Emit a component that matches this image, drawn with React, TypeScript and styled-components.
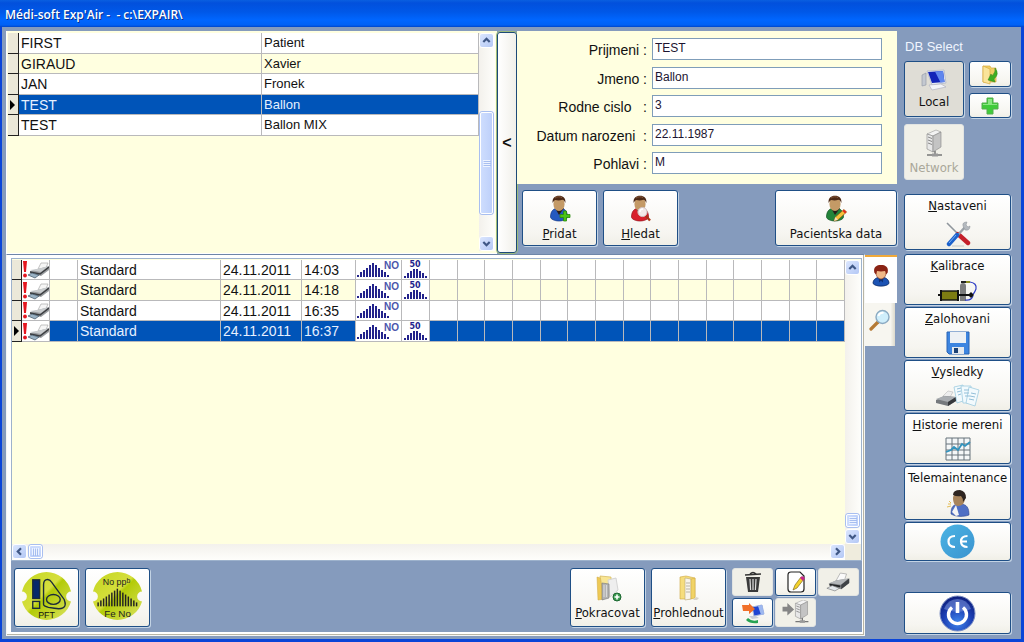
import React from "react";
import styled, { createGlobalStyle, css } from "styled-components";

const ui = '"DejaVu Sans Condensed", "Noto Sans", sans-serif';
const sans = '"Liberation Sans", Arial, sans-serif';
const steel = "#859bbd";
const cream = "#ffffe0";

const Global = createGlobalStyle`
  *, *::before, *::after { box-sizing: border-box; }
  body { margin: 0; font-family: ${sans}; color: #111; }
  button, input { font: inherit; color: inherit; margin: 0; }
  svg { display: block; flex: none; }
`;

const Window = styled.div`
  min-height: 100vh;
  display: flex;
  flex-direction: column;
  background: ${steel};
  border: solid #0a45d8;
  border-width: 0 3px 3px 2px;
`;

const TitleBar = styled.header`
  height: 27px;
  margin: 0 -3px 0 -2px;
  padding: 3px 5px 0;
  background: linear-gradient(#0a5fe0 0, #0250dc 3px, #0058e8 12px, #0066ff 20px, #0061f5 25px, #0045c8 27px);
  color: #fff;
  font: 600 12px/24px "Open Sans", "Noto Sans", sans-serif;
  text-shadow: 1px 1px 0 #0a2f8c;
  white-space: pre;
`;

const Body = styled.div`
  flex: 1;
  display: grid;
  grid-template-columns: minmax(0, 1fr) 107px;
  column-gap: 7px;
  padding: 4px 10px 3px 4px;
`;

const Main = styled.main`
  display: flex;
  flex-direction: column;
  min-width: 0;
`;

const TopArea = styled.section`
  display: grid;
  grid-template-columns: minmax(0, 1fr) 20px 380px;
  height: 223px;
`;

const ListPanel = styled.div`
  display: grid;
  grid-template-columns: minmax(0, 1fr) 16px;
  padding: 2px 2px 2px 1px;
  background: ${cream};
  border-left: 1px solid #fff;
  border-bottom: 1px solid #fff;
`;

const Splitter = styled.button`
  margin: 1px 0;
  padding: 0;
  border: 1px solid #1c4a78;
  outline: 1px solid #9dbb7c;
  border-radius: 3px;
  background: linear-gradient(90deg, #fff, #f1f0ea);
  font: bold 16px/16px ${sans};
`;

const Table = styled.table`
  width: 100%;
  table-layout: fixed;
  border-collapse: separate;
  border-spacing: 0;
  font-size: 14px;
  line-height: 16px;
`;

const Row = styled.tr<{ $selected?: boolean; $short?: boolean }>`
  height: ${(p) => (p.$short ? 20 : 21)}px;
  background: #fff;
  &:nth-child(even) { background: ${cream}; }
  ${(p) => p.$selected && css`
    && { background: #0054b8; color: #e6f0ff; }
  `}
`;

const Cell = styled.td<{ $small?: boolean; $picture?: boolean }>`
  padding: 0 0 0 2px;
  border-right: 1px solid #b9b9bb;
  border-bottom: 1px solid #b9b9bb;
  white-space: nowrap;
  overflow: hidden;
  font-size: ${(p) => (p.$small ? 13 : 14)}px;
  ${(p) => p.$picture && css`
    padding: 0;
    background: #fff;
  `}
`;

const Marker = styled.th`
  padding: 0;
  background: #ebe8d9;
  border-right: 1px solid #222;
  border-bottom: 1px solid #222;
`;

const Side = styled.div`
  display: flex;
  flex-direction: column;
`;

const Form = styled.form`
  height: 153px;
  padding: 7px 15px 10px 0;
  background: ${cream};
  display: grid;
  grid-template-columns: 130px minmax(0, 1fr);
  grid-auto-rows: 22px;
  align-content: space-between;
  column-gap: 5px;
`;

const Label = styled.label`
  font-size: 14px;
  line-height: 24px;
  text-align: right;
  white-space: pre;
`;

const Field = styled.input`
  min-width: 0;
  padding: 0 2px 2px;
  border: 1px solid #7f9db9;
  background: #fff;
  font-size: 12px;
  color: #1c1430;
`;

const FormActions = styled.div`
  display: flex;
  gap: 6px;
  padding: 6px 0 0 5px;
`;

const Button = styled.button<{ $w?: number; $h?: number; $pressed?: boolean; $right?: boolean; $top?: boolean }>`
  display: flex;
  flex-direction: column;
  align-items: center;
  justify-content: ${(p) => (p.$top ? "space-between" : "center")};
  gap: ${(p) => (p.$top ? 0 : 2)}px;
  flex: none;
  width: ${(p) => (p.$w ? `${p.$w}px` : "100%")};
  height: ${(p) => p.$h ?? 56}px;
  margin-left: ${(p) => (p.$right ? "auto" : "0")};
  padding: 2px 0;
  border: 1px solid #1f4f86;
  border-radius: 3px;
  box-shadow: 1px 1px 0 #c3d3e4;
  background: ${(p) => (p.$pressed ? "#dfddd6" : "linear-gradient(#fff, #f6f5f0 80%, #f0efe7)")};
  font: 13px/17px ${ui};
  white-space: nowrap;
  &:disabled {
    border-color: #e2e4e2;
    box-shadow: none;
    background: #f1f0e8;
    color: #a9a799;
  }
`;

const Bottom = styled.section`
  flex: 1;
  display: grid;
  grid-template-columns: minmax(0, 1fr) 32px;
`;

const Sheet = styled.div`
  display: flex;
  flex-direction: column;
  padding: 3px 2px 3px 4px;
  border: 1px solid #f5f6f4;
  border-top-color: #6e86a8;
  background: #fff;
  box-shadow: inset -1px -1px 0 #b9b5a4;
`;

const Grid = styled.div`
  flex: 1;
  display: grid;
  grid-template-columns: minmax(0, 1fr) 16px;
  grid-template-rows: minmax(0, 1fr) 16px;
  padding-top: 1px;
  border: 1px solid #9db2cc;
  background: ${cream};
`;

const Corner = styled.div`
  background: #efecdd;
`;

const Tools = styled.div`
  display: flex;
  align-items: flex-start;
  gap: 6px;
  padding: 7px 3px 4px 3px;
  height: 71px;
  background: ${steel};
`;

const ToolGrid = styled.div`
  display: grid;
  grid-template-columns: repeat(3, 41px);
  gap: 2px;
`;

const Spacer = styled.div`
  flex: 1;
`;

const Tabs = styled.div`
  display: flex;
  flex-direction: column;
  padding: 1px 0 0 0;
`;

const Tab = styled.button<{ $active?: boolean }>`
  display: flex;
  justify-content: center;
  align-items: center;
  height: ${(p) => (p.$active ? 48 : 43)}px;
  margin-right: ${(p) => (p.$active ? 0 : 2)}px;
  padding: 0 0 10px;
  border: 0;
  border-top: ${(p) => (p.$active ? "2px solid #f0a93a" : "0")};
  background: ${(p) => (p.$active ? "#fff" : "linear-gradient(90deg, #f7f6f0 85%, #dcd9cc)")};
`;

const Sidebar = styled.aside`
  display: flex;
  flex-direction: column;
  padding-bottom: 2px;
`;

const SideTitle = styled.h2`
  margin: 0;
  padding: 8px 1px 6px;
  font: 13px/16px ${sans};
  color: #f0f5ff;
`;

const DbGrid = styled.div`
  display: grid;
  grid-template-columns: 60px 42px;
  justify-content: space-between;
  row-gap: 6px;
`;

const Stack = styled.div<{ $gap: number }>`
  display: flex;
  flex-direction: column;
  gap: ${(p) => p.$gap}px;
`;

const Nav = styled.nav`
  display: flex;
  flex-direction: column;
  gap: 2px;
  margin: 14px 0 auto;
  & > :first-child { margin-bottom: 2px; }
`;

const Scroll = styled.div<{ $horizontal?: boolean }>`
  display: flex;
  flex-direction: ${(p) => (p.$horizontal ? "row" : "column")};
  justify-content: space-between;
  background: ${(p) => (p.$horizontal
    ? "linear-gradient(#f3f1ec, #fefefb)"
    : "linear-gradient(90deg, #f3f1ec, #fefefb)")};
`;

const Arrow = styled.button`
  display: flex;
  align-items: center;
  justify-content: center;
  flex: none;
  width: 15px;
  height: 15px;
  padding: 0;
  border: 1px solid #fff;
  border-radius: 3px;
  background: linear-gradient(135deg, #dbe6fe, #b4c8f5);
`;

const Thumb = styled.div<{ $horizontal?: boolean; $length: number }>`
  display: flex;
  flex: none;
  align-items: center;
  justify-content: center;
  width: ${(p) => (p.$horizontal ? p.$length : 15)}px;
  height: ${(p) => (p.$horizontal ? 15 : p.$length)}px;
  border: 1px solid #a9bff0;
  outline: 1px solid #fff;
  outline-offset: -2px;
  border-radius: 3px;
  background: linear-gradient(${(p) => (p.$horizontal ? 180 : 90)}deg, #cfdefe, #bccffa);
  ${(p) => !p.$horizontal && css`
    margin-top: auto;
    margin-bottom: ${p.$length > 50 ? 21 : 1}px;
  `}
  ${(p) => p.$horizontal && css`
    margin-right: auto;
    margin-left: 1px;
  `}
`;

const Hot = ({ children }: { children: string }) => (
  <span><u>{children[0]}</u>{children.slice(1)}</span>
);

const Chevron = ({ turn }: { turn: number }) => (
  <svg width="9" height="9" viewBox="0 0 9 9" aria-hidden="true">
    <path d="M1.3 6 4.5 2.8 7.7 6" fill="none" stroke="#3f5785" strokeWidth="2.2" transform={`rotate(${turn} 4.5 4.5)`} />
  </svg>
);

const Grip = ({ turn = 0 }: { turn?: number }) => (
  <svg width="9" height="9" viewBox="0 0 9 9" aria-hidden="true">
    <path d="M1 1.5h7M1 3.5h7M1 5.5h7M1 7.5h7" stroke="#edf3ff" transform={`rotate(${turn} 4.5 4.5)`} />
    <path d="M2 2.5h7M2 4.5h7M2 6.5h7" stroke="#93aee8" strokeWidth=".6" transform={`rotate(${turn} 4.5 4.5)`} />
  </svg>
);

const Pointer = () => (
  <svg width="8" height="12" viewBox="0 0 8 12" aria-label="current row">
    <path d="M2 1v10l5-5z" fill="#000" />
  </svg>
);

const Person = ({ color, dark, badge }: { color: string; dark: string; badge: "add" | "find" | "edit" }) => (
  <svg width="26" height="28" viewBox="0 0 26 28" aria-hidden="true">
    <path d="M3.500 22c0-6 3-9 8.500-9s8.500 3 8.500 9c0 2-4 4-8.500 4s-8.500-2-8.500-4z" fill={color} stroke={dark} strokeWidth=".7" />
    <path d="m8 13 4 7 5-7z" fill="#271c18" />
    <ellipse cx="12" cy="9" rx="5.6" ry="7" fill="#c49a66" />
    <path d="M5.600 8C5 3 8 .8 12 .8S19 3 18.400 8c-.8-1.500-1-2.600-3-3.200-2.400.8-5 .8-7 .2-1.400.8-2 1.700-2.800 3z" fill="#4d2a17" />
    <path d="M8 3c2-1.500 5-1.600 7-.4" fill="none" stroke="#87583a" />
    {badge === "add" && <path d="M16.500 16h3v3.500H23v3h-3.500V26h-3v-3.500H13v-3h3.500z" fill="#4cc414" stroke="#2a8a0c" strokeWidth=".8" />}
    {badge === "find" && (
      <g>
        <path d="m18 21 4 4.500" stroke="#a83318" strokeWidth="2.400" />
        <circle cx="14.500" cy="17" r="4.600" fill="#f3e9e9" stroke="#cfc2c2" />
        <path d="M12 17a3 3 0 0 1 3-3" fill="none" stroke="#fff" strokeWidth="1.400" />
      </g>
    )}
    {badge === "edit" && (
      <g>
        <path d="m11 26 1.400-4 8.600-7.500 2.600 2.600-8.600 7.700z" fill="#f6c23a" stroke="#9b5a12" strokeWidth=".7" />
        <path d="m19.500 16 1.500-1.500 2.600 2.600L22 18.500z" fill="#e02a20" />
        <path d="m11 26 1.400-4 2.600 2.800z" fill="#f2dfbb" />
      </g>
    )}
  </svg>
);

const UserTab = () => (
  <svg width="18" height="23" viewBox="0 0 20 26" aria-hidden="true">
    <path d="M1 22c0-5 4-7 9-7s9 2 9 7c-3 4-15 4-18 0z" fill="#1b53b4" stroke="#0b2c6b" />
    <path d="M7 15h6l-1 6-2-2-2 2z" fill="#0d2f74" />
    <path d="M4 8c0 6 3 9 6 9s6-3 6-9-12-6-12 0z" fill="#f0b888" stroke="#8e3a1c" strokeWidth=".7" />
    <path d="M2.500 10C1 3 5 1 10 1s9 2 7.500 9l-2 2c0-3-1-4-1-4-3 .6-6 .6-9 0l-1 4z" fill="#8a2314" />
  </svg>
);

const Magnifier = () => (
  <svg width="22" height="22" viewBox="0 0 22 22" aria-hidden="true">
    <path d="m2 20 7-7" stroke="#b57a35" strokeWidth="3.200" strokeLinecap="round" />
    <circle cx="13.500" cy="8" r="6.500" fill="#cfeefb" stroke="#8baac2" strokeWidth="1.400" />
    <path d="M9.500 7a4 4 0 0 1 5-3" fill="none" stroke="#fff" strokeWidth="2" />
  </svg>
);

const Printer = () => (
  <svg width="25" height="20" viewBox="0 0 28 22" aria-hidden="true">
    <path d="m11 10 5-9 7 1-3 9z" fill="#fafafa" stroke="#999" strokeWidth=".7" />
    <path d="m3 13 9-4 14-2v5l-9 7-12-3z" fill="#85888b" />
    <path d="m4 12 8-3 13-2-8 7z" fill="#b4b7ba" />
    <path d="m17 14 9-7v5l-9 7z" fill="#3f4246" />
    <path d="m4 14 12 2" stroke="#222426" strokeWidth="2" />
    <path d="m1 18 6-3 8 3-5 3z" fill="#e4e8ec" stroke="#666" strokeWidth=".6" />
  </svg>
);

const RowPrinter = () => (
  <svg width="28" height="19" viewBox="0 0 28 19" aria-label="not printed">
    <path d="M1 1h4l-1 11H2z" fill="#e5171f" />
    <circle cx="3" cy="15.500" r="1.900" fill="#e5171f" />
    <path d="m16 9 3-6 7 0-3 7z" fill="#f6f6f6" stroke="#aaa" strokeWidth=".7" />
    <path d="m8 11 8-2 11-3v4l-8 6-11-3z" fill="#9a9da0" />
    <path d="m8 10 7-1 12-3-8 6z" fill="#c9ccce" />
    <path d="m8 12 10 2 9-7" fill="none" stroke="#3b3d40" strokeWidth="1.400" />
    <path d="m6 15 4-2 7 2-4 3z" fill="#9ab2c4" stroke="#3d5263" strokeWidth=".7" />
  </svg>
);

const NoIcon = () => (
  <svg width="45" height="19" viewBox="0 0 45 19" aria-label="NO">
    {[2, 5, 7, 9, 12, 14, 12, 9, 7, 5, 2].map((h, i) => (
      <rect key={i} x={1 + i * 3} y={17 - h} width="2" height={h} fill="#23238c" />
    ))}
    <text x="28" y="9" fontFamily={sans} fontSize="10" fontWeight="bold" fill="#4a56ac">NO</text>
  </svg>
);

const FiftyIcon = () => (
  <svg width="27" height="19" viewBox="0 0 27 19" aria-label="50">
    {[2, 5, 7, 9, 9, 7, 5, 2].map((h, i) => (
      <rect key={i} x={2 + i * 3} y={18 - h} width="2" height={h} fill="#23238c" />
    ))}
    <text x="13" y="7" textAnchor="middle" fontFamily='"DejaVu Sans", sans-serif' fontWeight="bold" fontSize="8" fill="#23238c">50</text>
  </svg>
);

const Badge = ({ kind }: { kind: "pft" | "no" }) => (
  <svg width="53" height="53" viewBox="0 0 54 54" aria-label={kind === "pft" ? "PFT" : "No ppb Fe No"}>
    <defs>
      <linearGradient id={`lime-${kind}`} x1="0" y1="0" x2="1" y2="1">
        <stop offset="0" stopColor="#c3d61e" />
        <stop offset=".45" stopColor="#d6df3e" />
        <stop offset=".5" stopColor="#b3cb08" />
        <stop offset="1" stopColor="#dce464" />
      </linearGradient>
    </defs>
    <path d="M27 1a26 26 0 0 1 25 20 5 5 0 0 0 0 10 26 26 0 0 1-50 0 5 5 0 0 0 0-10A26 26 0 0 1 27 1z" fill={`url(#lime-${kind})`} />
    {kind === "pft" ? (
      <g fill="none" stroke="#1b2b3a" strokeWidth="1.400">
        <rect x="13" y="9" width="7" height="19" fill="#06296a" />
        <rect x="13" y="31" width="7" height="7" />
        <path d="M24 34V14c0-7 6-6 8-3l13 18c4 10-4 10-10 9l-6-1q-5-1-5-3z" />
        <ellipse cx="34" cy="29" rx="7" ry="5" />
        <text x="27" y="48" textAnchor="middle" fontFamily={sans} fontSize="9" fill="#111" stroke="none">PFT</text>
      </g>
    ) : (
      <g fill="#222">
        <text x="26" y="14" textAnchor="middle" fontFamily={sans} fontSize="9">No pp<tspan dy="-2" fontSize="7">b</tspan></text>
        {[4, 6, 8, 10, 12, 14, 16, 18, 16, 14, 12, 10, 8, 6, 4].map((h, i) => (
          <rect key={i} x={6.500 + i * 2.800} y={36 - h} width="1.500" height={h} />
        ))}
        <text x="27" y="47" textAnchor="middle" fontFamily={sans} fontSize="10">Fe No</text>
      </g>
    )}
  </svg>
);

const FolderOpen = ({ plus }: { plus?: boolean }) => (
  <svg width="28" height="28" viewBox="0 0 28 28" aria-hidden="true">
    {plus ? (
      <g>
        <path d="m3 3 7 2v20l-6 1z" fill="#eec955" stroke="#cfa63c" strokeWidth=".5" />
        <path d="m6 2 11 1 1 18-8 3z" fill="#f8e594" stroke="#d3b558" strokeWidth=".7" />
        <path d="m14 6 8-2 2 12-8 7z" fill="#eee" stroke="#d4d4d4" />
        <path d="m8 9 7 1v14l-7 2z" fill="#b4b4b4" stroke="#777" strokeWidth=".6" />
        <path d="M10 11v12M12.500 11v12" stroke="#d8d8d8" />
        <circle cx="23" cy="23" r="4" fill="#3b9b51" stroke="#1d6732" />
        <path d="M23 20.500v5M20.500 23h5" stroke="#fff" strokeWidth="1.600" />
      </g>
    ) : (
      <g>
        <path d="m5 3 6-1 9 2v19l-5 2H5z" fill="#f6dd7c" stroke="#cfa63c" strokeWidth=".6" />
        <path d="m10 4 6 1v20l-6 1z" fill="#f8f4ea" stroke="#b9a875" strokeWidth=".6" />
        <path d="M11 9h4M11 12h4M11 15h4M11 18h4" stroke="#b8b4a5" />
        <path d="m16 5 4-1v20l-4 1z" fill="#f1d366" stroke="#cfa63c" strokeWidth=".5" />
        <path d="m21 23 3 1-2 2-4 0z" fill="#d8d4c8" />
      </g>
    )}
  </svg>
);

const Trash = () => (
  <svg width="18" height="22" viewBox="0 0 18 22" aria-hidden="true">
    <path d="M6 3q3-3 6 0M1 4l16-1" fill="none" stroke="#333" strokeWidth="1.400" />
    <path d="M2 6h14l-2 15H4z" fill="#3a3a3a" />
    <path d="m6 8 .6 11M9 8v11M12 8l-.6 11" stroke="#dedede" strokeWidth="1.200" />
  </svg>
);

const EditPage = () => (
  <svg width="20" height="22" viewBox="0 0 20 22" aria-hidden="true">
    <path d="M5 1h9l4 4v13q0 3-3 3H5q-3 0-3-3V4q0-3 3-3z" fill="#fff" stroke="#222" strokeWidth="1.200" />
    <path d="m7 19 2-5 6-8 3 2-7 9z" fill="#f4d22c" stroke="#6e5a10" strokeWidth=".6" />
    <path d="m14 7 2-2 3 2-2 3z" fill="#c7268b" />
  </svg>
);

const Server = ({ arrow, w = 26, h = 28 }: { arrow?: boolean; w?: number; h?: number }) => (
  <svg width={w} height={h} viewBox={arrow ? "0 0 30 26" : "0 0 26 28"} aria-hidden="true">
    {arrow && <path d="M1 7h5V3l7 7-7 6v-4H1z" fill="#858585" />}
    <g transform={arrow ? "translate(9 -1) scale(.9)" : undefined}>
      <path d="m6 5 9-4 5 2-8 4z" fill="#f3f3f3" stroke="#999" strokeWidth=".6" />
      <path d="m6 5 6 2v16l-6-3z" fill="#e8e8e8" stroke="#858585" strokeWidth=".6" />
      <path d="m12 7 8-4v15l-8 5z" fill="#c4c4c4" stroke="#858585" strokeWidth=".6" />
      <path d="m7 8 4 1.500M7 11l4 1.500M7 14l4 1.500" stroke="#888" />
      <path d="M14 22v4M6 26h15" stroke="#777" strokeWidth="1.500" />
      <path d="M11 24.500h6v3h-6z" fill="#999" />
    </g>
  </svg>
);

const Transfer = () => (
  <svg width="24" height="22" viewBox="0 0 24 22" aria-hidden="true">
    <path d="m11 5 10-2 2 9-10 2z" fill="#1f45d3" stroke="#a7b6dc" />
    <path d="m17 4 4-1 2 9-3 1z" fill="#9eb8f0" />
    <path d="m8 14 7 0 3 2-7 1z" fill="#c8ced8" />
    <path d="M1 3h7V1l6 6-6 5V9H2z" fill="#f1702a" />
    <path d="M7 16q4 4 10 2v3Q9 22 5 18z" fill="#26a352" />
  </svg>
);

const Computer = () => (
  <svg width="26" height="22" viewBox="0 0 26 22" aria-hidden="true">
    <path d="m1 6 4-2v12l-4 1z" fill="#c3c8d0" stroke="#8f96a3" strokeWidth=".6" />
    <path d="m6 2 17-1 2 13-14 2z" fill="#e4e9f4" stroke="#a5adbd" strokeWidth=".6" />
    <path d="m7 3 15-1 1.500 11-12.500 1z" fill="#1224b8" />
    <path d="m14 2.500 8-.5 1.500 11-4 .4z" fill="#5f86ee" />
    <path d="m8 16 12-1 5 3-14 3z" fill="#f3f5f9" stroke="#aab" strokeWidth=".6" />
  </svg>
);

const FolderArrow = () => (
  <svg width="20" height="21" viewBox="0 0 20 21" aria-hidden="true">
    <path d="M3 2h7l1 2h5v14H3z" fill="#f2cf64" stroke="#d8ab3d" strokeWidth=".7" />
    <path d="m3 2 7 3v15l-7-2z" fill="#fae49a" stroke="#d8ab3d" strokeWidth=".7" />
    <path d="M15 4q5 6-1 11l1 3-7-2 3-6 1 2q4-4 3-8z" fill="#3fae21" stroke="#28831a" strokeWidth=".5" />
  </svg>
);

const Plus = () => (
  <svg width="20" height="20" viewBox="0 0 20 20" aria-hidden="true">
    <path d="M7 2h6v5h5v6h-5v5H7v-5H2V7h5z" fill="#40cb3a" stroke="#55ad4e" />
    <path d="M8 3h4v5h5v1H3V8h5z" fill="#8ae681" />
  </svg>
);

const Cross = () => (
  <svg width="26" height="26" viewBox="0 0 26 26" aria-hidden="true">
    <path d="m2 2 12 12" stroke="#8f969c" strokeWidth="1.600" />
    <path d="m13 13 10 9" stroke="#c4202a" strokeWidth="4.400" strokeLinecap="round" />
    <path d="M21 5 11 16" stroke="#9ba1a7" strokeWidth="2.400" />
    <path d="M18 5q-1-4 4-4l-1 3 2 2 2-1q0 5-5 4z" fill="#b4b9be" stroke="#8b9196" strokeWidth=".5" />
    <path d="m12 14-8 9" stroke="#1c62cc" strokeWidth="4.400" strokeLinecap="round" />
    <path d="m11 14-7 8" stroke="#76b0f4" />
    <path d="M7 25h12" stroke="#c6c8c8" />
  </svg>
);

const Pump = () => (
  <svg width="40" height="22" viewBox="0 0 40 22" aria-hidden="true">
    <path d="M22 6q0-3 3-3t3 3v15h-6z" fill="#7c7c7c" />
    <path d="M23 2h5" stroke="#222" strokeWidth="2" />
    <path d="M28 2h4" stroke="#8b8b20" strokeWidth="2" />
    <path d="M32 2q7 1 6 7-2 5-4 6M27 20q6 1 8-4" fill="none" stroke="#2c3bc5" strokeWidth="1.200" />
    <path d="M0 15h3M20 15h12" stroke="#111" strokeWidth="2" />
    <rect x="3" y="11" width="17" height="9" fill="#7d7c12" stroke="#111" strokeWidth="1.400" />
    <path d="M3 10v11M20 10v11" stroke="#111" strokeWidth="2" />
    <path d="m30 15 3-3 3 3-3 3z" fill="#111" />
  </svg>
);

const Floppy = () => (
  <svg width="24" height="24" viewBox="0 0 24 24" aria-hidden="true">
    <path d="M1 1h22v22H3l-2-2z" fill="#3d85e0" stroke="#2a65b5" />
    <path d="M4 1h16v11H4z" fill="#edf1f5" />
    <path d="M6 16h12v7H6z" fill="#e5e9ee" />
    <path d="M8 17h4v5H8z" fill="#1c4275" />
  </svg>
);

const Results = () => (
  <svg width="46" height="24" viewBox="0 0 46 24" aria-hidden="true">
    <path d="m8 12 5-5 5 1-3 5z" fill="#eee" stroke="#bbb" strokeWidth=".6" />
    <path d="m1 16 8-4 12 1v4l-8 5-12-3z" fill="#75797d" />
    <path d="m1 15 8-3 12 1-8 5z" fill="#a9adb1" />
    <path d="m13 18 8-5v4l-8 5z" fill="#35383c" />
    <g fill="#f2fafd" stroke="#9ecbe0" strokeWidth=".8">
      <path d="m19 3 9-2 3 15-9 3z" />
      <path d="m26 2 10 0 1 17-9 0z" />
      <path d="m34 3 10 3-4 16-9-3z" />
    </g>
    <path d="m22 5 4-1M22 8l4-1M23 11l3-1M29 6h5M29 9h5M30 12h5M36 9l5 1M35 12l5 1M34 15l5 1" stroke="#93bfd8" />
  </svg>
);

const Chart = () => (
  <svg width="26" height="24" viewBox="0 0 26 24" aria-hidden="true">
    <path d="M1 1h24v22H1zM7 1v22M13 1v22M19 1v22M1 7h24M1 13h24M1 18h24" fill="#f4f7f8" stroke="#66727a" />
    <path d="m1 15 5-2 3-3 4 3 4-6 3 2 5-4" fill="none" stroke="#3293bd" strokeWidth="1.800" />
  </svg>
);

const Support = () => (
  <svg width="24" height="28" viewBox="0 0 24 28" aria-hidden="true">
    <path d="M5 25c0-7 2-10 9-10s9 4 9 11c-5 2-13 2-18-1z" fill="#5070c4" stroke="#2d4690" strokeWidth=".6" />
    <path d="m10 16 3 10-3 1-4-4z" fill="#f4f4f4" />
    <path d="M7 9c0 5 2 8 5 8 4 0 7-3 7-8s-12-6-12 0z" fill="#a8845b" />
    <path d="M7 6q0-5 7-5 6 1 6 8l-3 4q0-4-2-6-4 1-8-1z" fill="#2e2520" />
    <path d="m2 15 3 0M3 12l2 2M1 18l4-1" stroke="#e3bd58" />
  </svg>
);

const CeMark = () => (
  <svg width="35" height="35" viewBox="0 0 35 35" aria-label="CE">
    <defs>
      <linearGradient id="ce" x1="0" y1="0" x2="1" y2="1">
        <stop offset="0" stopColor="#4bb4e4" />
        <stop offset="1" stopColor="#3a93cf" />
      </linearGradient>
    </defs>
    <circle cx="17.500" cy="17.500" r="17" fill="url(#ce)" />
    <path d="M15 12q-6.500 0-6.500 5.500T15 23M27.500 12q-6.500 0-6.500 5.500t6.500 5.500M21 17.500h6" fill="none" stroke="#fff" strokeWidth="2.200" />
  </svg>
);

const Power = () => (
  <svg width="37" height="37" viewBox="0 0 37 37" aria-hidden="true">
    <defs>
      <radialGradient id="pw" cx=".5" cy=".75" r=".75">
        <stop offset="0" stopColor="#3f86ec" />
        <stop offset=".55" stopColor="#1c3fb4" />
        <stop offset="1" stopColor="#0c1c78" />
      </radialGradient>
    </defs>
    <circle cx="18.500" cy="18.500" r="17.500" fill="url(#pw)" stroke="#7d90c4" />
    <path d="M5 14Q9 4 18.500 4T32 14q-13 6-27 0z" fill="#7e98de" opacity=".55" />
    <path d="M13 12.500a9 9 0 1 0 11 0" fill="none" stroke="#fff" strokeWidth="3.400" />
    <path d="M18.500 7v11" stroke="#fff" strokeWidth="3.600" />
  </svg>
);

const patients = [
  ["FIRST", "Patient"],
  ["GIRAUD", "Xavier"],
  ["JAN", "Fronek"],
  ["TEST", "Ballon"],
  ["TEST", "Ballon MIX"],
];

const exams = [
  { time: "14:03", fifty: true },
  { time: "14:18", fifty: true },
  { time: "16:35", fifty: false },
  { time: "16:37", fifty: true },
];

const fields = [
  ["prijmeni", "Prijmeni :", "TEST"],
  ["jmeno", "Jmeno :", "Ballon"],
  ["rodne", "Rodne cislo   :", "3"],
  ["datum", "Datum narozeni  :", "22.11.1987"],
  ["pohlavi", "Pohlavi :", "M"],
];

const extraColumns = Array.from({ length: 15 }, (_, i) => i);

const sections = [
  { label: "Nastaveni", icon: <Cross />, h: 56 },
  { label: "Kalibrace", icon: <Pump />, h: 51 },
  { label: "Zalohovani", icon: <Floppy />, h: 51 },
  { label: "Vysledky", icon: <Results />, h: 51 },
  { label: "Historie mereni", icon: <Chart />, h: 51 },
];

export default function App() {
  return (
    <>
      <Global />
      <Window>
        <TitleBar>{"Médi-soft Exp'Air -  - c:\\EXPAIR\\"}</TitleBar>
        <Body>
          <Main>
            <TopArea>
              <ListPanel>
                <div>
                  <Table>
                    <colgroup><col style={{ width: 11 }} /><col style={{ width: 243 }} /><col /></colgroup>
                    <tbody>
                      {patients.map(([last, first], i) => (
                        <Row key={i} $selected={i === 3} $short={i % 2 === 1}>
                          <Marker scope="row">{i === 3 && <Pointer />}</Marker>
                          <Cell>{last}</Cell>
                          <Cell $small>{first}</Cell>
                        </Row>
                      ))}
                    </tbody>
                  </Table>
                </div>
                <Scroll>
                  <Arrow aria-label="Up"><Chevron turn={0} /></Arrow>
                  <Thumb $length={104}><Grip /></Thumb>
                  <Arrow aria-label="Down"><Chevron turn={180} /></Arrow>
                </Scroll>
              </ListPanel>
              <Splitter>&lt;</Splitter>
              <Side>
                <Form>
                  {fields.map(([id, label, value]) => (
                    <React.Fragment key={id}>
                      <Label htmlFor={id}>{label}</Label>
                      <Field id={id} defaultValue={value} />
                    </React.Fragment>
                  ))}
                </Form>
                <FormActions>
                  <Button $w={75}><Person color="#2459c0" dark="#153a85" badge="add" /><Hot>Pridat</Hot></Button>
                  <Button $w={75}><Person color="#d81f2c" dark="#93121c" badge="find" /><Hot>Hledat</Hot></Button>
                  <Button $w={122} $right><Person color="#23843a" dark="#125524" badge="edit" />Pacientska data</Button>
                </FormActions>
              </Side>
            </TopArea>
            <Bottom>
              <Sheet>
                <Grid>
                  <div>
                    <Table>
                      <colgroup>
                        <col style={{ width: 10 }} />
                        <col style={{ width: 28 }} />
                        <col style={{ width: 28 }} />
                        <col style={{ width: 143 }} />
                        <col style={{ width: 81 }} />
                        <col style={{ width: 54 }} />
                        <col style={{ width: 46 }} />
                        <col style={{ width: 28 }} />
                        {extraColumns.map((c) => <col key={c} />)}
                      </colgroup>
                      <tbody>
                        {exams.map(({ time, fifty }, i) => (
                          <Row key={time} $selected={i === 3} $short={i % 2 === 0}>
                            <Marker scope="row">{i === 3 && <Pointer />}</Marker>
                            <Cell $picture><RowPrinter /></Cell>
                            <Cell />
                            <Cell>Standard</Cell>
                            <Cell>24.11.2011</Cell>
                            <Cell>{time}</Cell>
                            <Cell $picture><NoIcon /></Cell>
                            <Cell $picture>{fifty && <FiftyIcon />}</Cell>
                            {extraColumns.map((c) => <Cell key={c} />)}
                          </Row>
                        ))}
                      </tbody>
                    </Table>
                  </div>
                  <Scroll>
                    <Arrow aria-label="Up"><Chevron turn={0} /></Arrow>
                    <Thumb $length={15}><Grip /></Thumb>
                    <Arrow aria-label="Down"><Chevron turn={180} /></Arrow>
                  </Scroll>
                  <Scroll $horizontal>
                    <Arrow aria-label="Left"><Chevron turn={-90} /></Arrow>
                    <Thumb $horizontal $length={15}><Grip turn={90} /></Thumb>
                    <Arrow aria-label="Right"><Chevron turn={90} /></Arrow>
                  </Scroll>
                  <Corner />
                </Grid>
                <Tools>
                  <Button $w={65} $h={59}><Badge kind="pft" /></Button>
                  <Button $w={65} $h={59}><Badge kind="no" /></Button>
                  <Spacer />
                  <Button $w={75} $h={59}><FolderOpen plus /><Hot>Pokracovat</Hot></Button>
                  <Button $w={75} $h={59}><FolderOpen /><Hot>Prohlednout</Hot></Button>
                  <ToolGrid>
                    <Button $h={28} disabled aria-label="Delete"><Trash /></Button>
                    <Button $h={28} aria-label="Edit"><EditPage /></Button>
                    <Button $h={28} disabled aria-label="Print"><Printer /></Button>
                    <Button $h={29} aria-label="Transfer to local"><Transfer /></Button>
                    <Button $h={29} disabled aria-label="Transfer to network"><Server arrow w={30} h={25} /></Button>
                  </ToolGrid>
                </Tools>
              </Sheet>
              <Tabs>
                <Tab $active aria-label="Patient"><UserTab /></Tab>
                <Tab aria-label="Search"><Magnifier /></Tab>
              </Tabs>
            </Bottom>
          </Main>
          <Sidebar>
            <SideTitle>DB Select</SideTitle>
            <DbGrid>
              <Stack $gap={7}>
                <Button $h={56} $pressed><Computer />Local</Button>
                <Button $h={56} disabled><Server />Network</Button>
              </Stack>
              <Stack $gap={6}>
                <Button $h={26} aria-label="Open database"><FolderArrow /></Button>
                <Button $h={25} aria-label="Add database"><Plus /></Button>
              </Stack>
            </DbGrid>
            <Nav>
              {sections.map(({ label, icon, h }) => (
                <Button key={label} $h={h} $top><Hot>{label}</Hot>{icon}</Button>
              ))}
              <Button $h={54} $top>Telemaintenance<Support /></Button>
              <Button $h={39} aria-label="CE"><CeMark /></Button>
            </Nav>
            <Button $h={42} aria-label="Power"><Power /></Button>
          </Sidebar>
        </Body>
      </Window>
    </>
  );
}
